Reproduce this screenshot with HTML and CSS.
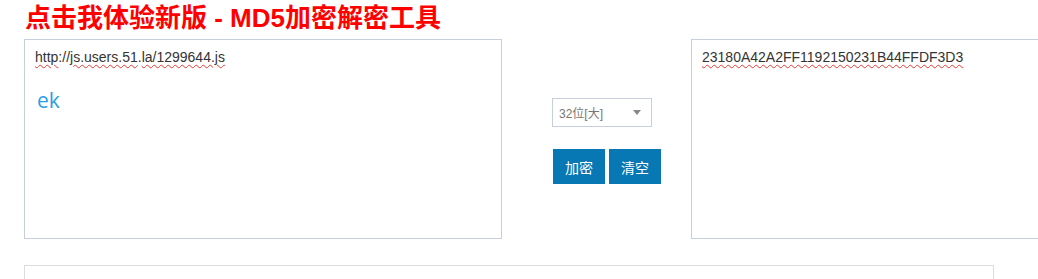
FILE: index.html
```html
<!DOCTYPE html>
<html lang="zh">
<head>
<meta charset="utf-8">
<title>MD5加密解密工具</title>
<link rel="stylesheet" href="styles.css">
</head>
<body>
<div class="page">
  <h1 class="title"><a href="#">点击我体验新版 - MD5加密解密工具</a></h1>
  <div class="tool">
    <div class="box box-in">
      <div class="content"><span class="sp">http</span>://<span class="sp">js.users.51</span>.<span class="sp">la/1299644.js</span></div>
      <div class="hint">ek</div>
    </div>
    <div class="middle">
      <div class="select"><span>32位[大]</span><i class="caret"></i></div>
      <div class="buttons">
        <button class="btn">加密</button>
        <button class="btn">清空</button>
      </div>
    </div>
    <div class="box box-out">
      <div class="content"><span class="sp">23180A42A2FF1192150231B44FFDF3D3</span></div>
    </div>
  </div>
  <div class="panel"></div>
</div>
</body>
</html>
```

FILE: styles.css
```css
html, body {
  margin: 0;
  padding: 0;
  overflow: hidden;
  background: #fff;
}
body {
  font-family: "Liberation Sans", Arial, "Noto Sans CJK SC", sans-serif;
}
.page {
  box-sizing: border-box;
  padding-left: 24px;
  width: 1038px;
  height: 279px;
  overflow: hidden;
}
.title {
  margin: 0;
  height: 39px;
  font-size: 26px;
  line-height: 36px;
  font-weight: bold;
  padding-left: 1px;
  white-space: nowrap;
}
.title a {
  color: #ff0000;
  text-decoration: none;
}
.tool {
  display: flex;
  align-items: flex-start;
  overflow: hidden;
}
.box {
  position: relative;
  width: 476px;
  height: 198px;
  border: 1px solid #c6cfdb;
  flex: none;
}
.box-out {
  border-right: 0;
}
.content {
  padding: 7px 10px;
  font-size: 14px;
  line-height: 20px;
  color: #333;
  white-space: nowrap;
}
.sp {
  text-decoration: underline wavy #e53935;
  text-decoration-thickness: 1px;
  text-underline-offset: 2px;
}
.hint {
  position: absolute;
  left: 12px;
  top: 46px;
  font-size: 21px;
  color: #2a9fe6;
  font-family: "Open Sans", "Liberation Sans", sans-serif;
}
.middle {
  width: 139px;
  padding-left: 50px;
  padding-top: 59px;
  flex: none;
}
.select {
  box-sizing: border-box;
  width: 100px;
  height: 29px;
  border: 1px solid #c6cfdb;
  display: flex;
  align-items: center;
  justify-content: space-between;
  padding: 0 10px 0 6px;
  font-size: 12px;
  color: #777;
}
.caret {
  width: 0;
  height: 0;
  border-left: 4px solid transparent;
  border-right: 4px solid transparent;
  border-top: 5px solid #888;
}
.buttons {
  display: flex;
  gap: 4px;
  margin-top: 22px;
  padding-left: 1px;
}
.btn {
  width: 52px;
  height: 35px;
  border: 0;
  padding: 0;
  background: #0778b3;
  color: #fff;
  font-size: 14px;
  font-family: "Noto Sans CJK SC", sans-serif;
}
.panel {
  margin-top: 26px;
  width: 968px;
  height: 40px;
  border: 1px solid #dcdcdc;
}
```
